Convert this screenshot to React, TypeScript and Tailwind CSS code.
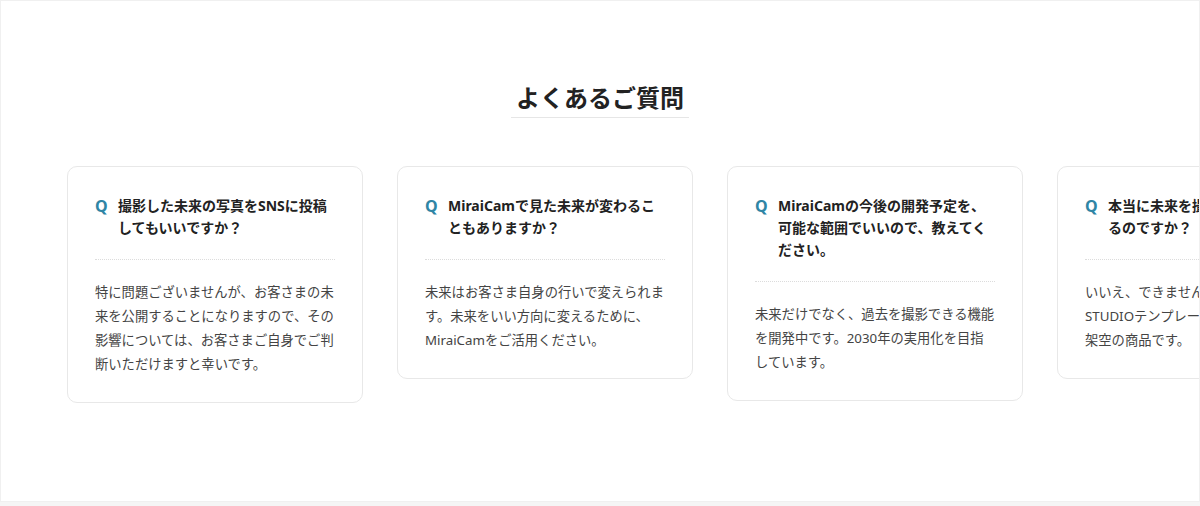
const faqs = [
  {
    q: "撮影した未来の写真をSNSに投稿してもいいですか？",
    a: "特に問題ございませんが、お客さまの未来を公開することになりますので、その影響については、お客さまご自身でご判断いただけますと幸いです。",
  },
  {
    q: "MiraiCamで見た未来が変わることもありますか？",
    a: "未来はお客さま自身の行いで変えられます。未来をいい方向に変えるために、MiraiCamをご活用ください。",
  },
  {
    q: "MiraiCamの今後の開発予定を、可能な範囲でいいので、教えてください。",
    a: "未来だけでなく、過去を撮影できる機能を開発中です。2030年の実用化を目指しています。",
  },
  {
    q: "本当に未来を撮影することができるのですか？",
    a: "いいえ、できません。MiraiCamはSTUDIOテンプレートのために作られた架空の商品です。",
  },
];

function FaqCard({ q, a }: { q: string; a: string }) {
  return (
    <div className="w-[296px] shrink-0 rounded-[10px] border border-[#e8e8e8] bg-white px-[27px] pt-7 pb-[26px]">
      <div className="flex">
        <span className="w-[23px] shrink-0 text-[16px] leading-[22px] font-bold text-[#2f85a5]">Q</span>
        <p className="w-[217px] text-[14px] leading-[22px] font-bold text-[#222]">{q}</p>
      </div>
      <div className="mt-5 border-t border-dotted border-[#dcdcdc]" />
      <p className="mt-5 text-[13.3px] leading-[24px] text-[#444]">{a}</p>
    </div>
  );
}

export default function App() {
  return (
    <div
      className="h-[506px] w-full bg-[#f5f5f5]"
      style={{ fontFamily: '"Noto Sans", "Noto Sans CJK JP", sans-serif' }}
    >
      <section className="h-[502px] overflow-hidden border border-[#f0f0f0] bg-white">
        <div className="flex justify-center pt-[79px]">
          <h2 className="border-b border-[#e6e6e6] px-[5px] pb-[1px] text-[24px] leading-[36px] font-bold text-[#222]">
            よくあるご質問
          </h2>
        </div>
        <div className="mt-12 flex items-start gap-[34px] pl-[66px]">
          {faqs.map((f) => (
            <FaqCard key={f.q} q={f.q} a={f.a} />
          ))}
        </div>
      </section>
    </div>
  );
}
